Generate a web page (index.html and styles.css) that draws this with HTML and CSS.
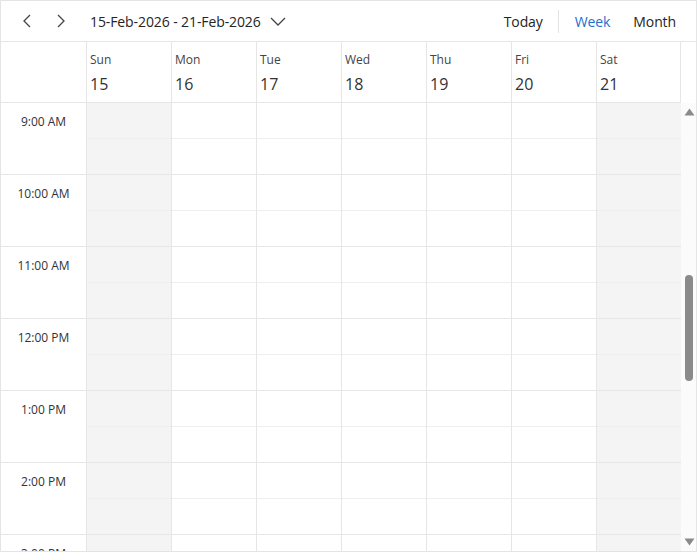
FILE: index.html
```html
<!DOCTYPE html>
<html>
<head>
<meta charset="utf-8">
<link rel="stylesheet" href="styles.css">
</head>
<body>
<div class="frame">
  <div class="toolbar">
    <div class="nav">
      <button class="icon-btn" aria-label="Previous">
        <svg width="10" height="14" viewBox="0 0 10 14"><path d="M8 1 L2 7 L8 13" fill="none" stroke="#444" stroke-width="1.3"/></svg>
      </button>
      <button class="icon-btn" aria-label="Next">
        <svg width="10" height="14" viewBox="0 0 10 14"><path d="M2 1 L8 7 L2 13" fill="none" stroke="#444" stroke-width="1.3"/></svg>
      </button>
      <div class="range">
        <span>15-Feb-2026 - 21-Feb-2026</span>
        <svg class="caret" width="16" height="9" viewBox="0 0 16 9"><path d="M1 1 L8 8 L15 1" fill="none" stroke="#444" stroke-width="1.3"/></svg>
      </div>
    </div>
    <div class="views">
      <span class="view">Today</span>
      <span class="sep"></span>
      <span class="view active">Week</span>
      <span class="view">Month</span>
    </div>
  </div>

  <div class="head">
    <div class="corner"></div>
    <div class="dayhead"><div class="dname">Sun</div><div class="dnum">15</div></div>
    <div class="dayhead"><div class="dname">Mon</div><div class="dnum">16</div></div>
    <div class="dayhead"><div class="dname">Tue</div><div class="dnum">17</div></div>
    <div class="dayhead"><div class="dname">Wed</div><div class="dnum">18</div></div>
    <div class="dayhead"><div class="dname">Thu</div><div class="dnum">19</div></div>
    <div class="dayhead"><div class="dname">Fri</div><div class="dnum">20</div></div>
    <div class="dayhead last"><div class="dname">Sat</div><div class="dnum">21</div></div>
    <div class="head-gap"></div>
  </div>

  <div class="body">
    <div class="grid">
      <div class="times">
        <div class="hour">9:00 AM</div>
        <div class="hour">10:00 AM</div>
        <div class="hour">11:00 AM</div>
        <div class="hour">12:00 PM</div>
        <div class="hour">1:00 PM</div>
        <div class="hour">2:00 PM</div>
        <div class="hour">3:00 PM</div>
      </div>
      <div class="col weekend"></div>
      <div class="col"></div>
      <div class="col"></div>
      <div class="col"></div>
      <div class="col"></div>
      <div class="col"></div>
      <div class="col weekend"></div>
    </div>
    <div class="scrollbar">
      <svg class="arrow" width="11" height="8" viewBox="0 0 11 8"><path d="M0.5 7.5 L5.5 0.5 L10.5 7.5 Z" fill="#8a8a8a"/></svg>
      <div class="thumb"></div>
      <svg class="arrow down" width="11" height="8" viewBox="0 0 11 8"><path d="M0.5 0.5 L5.5 7.5 L10.5 0.5 Z" fill="#8a8a8a"/></svg>
    </div>
  </div>
</div>
</body>
</html>
```

FILE: styles.css
```css
html, body {
  margin: 0;
  padding: 0;
  background: #ffffff;
}

body {
  font-family: "Open Sans", "Noto Sans", "Liberation Sans", sans-serif;
  color: #333333;
}

.frame {
  width: 697px;
  height: 552px;
  box-sizing: border-box;
  border: 1px solid #e4e4e4;
  display: flex;
  flex-direction: column;
  overflow: hidden;
}

/* toolbar */
.toolbar {
  height: 40px;
  flex: 0 0 40px;
  border-bottom: 1px solid #e6e6e6;
  display: flex;
  align-items: center;
  justify-content: space-between;
}

.nav {
  display: flex;
  align-items: center;
}

.icon-btn {
  border: 0;
  background: transparent;
  padding: 0;
  width: 34px;
  height: 32px;
  display: flex;
  align-items: center;
  justify-content: center;
  cursor: pointer;
}

.icon-btn:first-child {
  margin-left: 9px;
}

.range {
  display: flex;
  align-items: center;
  margin-left: 12px;
  font-size: 14px;
  color: #242424;
  letter-spacing: -0.1px;
}

.caret {
  margin-left: 9px;
  margin-top: 1px;
}

.views {
  display: flex;
  align-items: center;
  margin-right: 20px;
  font-size: 14px;
  color: #242424;
}

.view {
  letter-spacing: -0.1px;
}

.view:first-child {
  margin-top: 1px;
}

.sep {
  width: 1px;
  height: 23px;
  background: #e3e3e3;
  margin: 0 16px 0 15px;
}

.view.active {
  color: #1f6fcf;
  margin-right: 23px;
}

/* header */
.head {
  flex: 0 0 61px;
  height: 61px;
  display: grid;
  grid-template-columns: 85px repeat(7, 85px) 15px;
}

.corner,
.dayhead {
  border-bottom: 1px solid #e6e6e6;
  box-sizing: border-box;
}

.dayhead {
  border-left: 1px solid #e6e6e6;
  padding: 10px 0 0 3px;
}

.dayhead.last {
  border-right: 1px solid #e6e6e6;
}

.dname {
  font-size: 12px;
  line-height: 16px;
  color: #444444;
}

.dnum {
  font-size: 16px;
  line-height: 22px;
  margin-top: 5px;
  color: #333333;
}

/* body */
.body {
  flex: 1 1 auto;
  display: flex;
  overflow: hidden;
}

.grid {
  display: grid;
  grid-template-columns: 85px repeat(7, 85px);
  height: 520px;
}

.times {
  display: flex;
  flex-direction: column;
}

.hour {
  flex: 0 0 72px;
  height: 72px;
  box-sizing: border-box;
  border-bottom: 1px solid #e6e6e6;
  text-align: center;
  font-size: 12px;
  line-height: 16px;
  padding-top: 11px;
  color: #333333;
}

.col {
  border-left: 1px solid #e6e6e6;
  background-color: #ffffff;
  background-image: linear-gradient(to bottom,
    transparent 0, transparent 35px,
    #eeeeee 35px, #eeeeee 36px,
    transparent 36px, transparent 71px,
    #e6e6e6 71px, #e6e6e6 72px);
  background-size: 100% 72px;
}

.col.weekend {
  background-color: #f4f4f4;
}

.scrollbar {
  width: 15px;
  flex: 0 0 15px;
  background: #fbfbfb;
  display: flex;
  flex-direction: column;
  align-items: center;
}

.arrow {
  margin-top: 5px;
  margin-left: 1px;
}

.thumb {
  width: 8px;
  height: 106px;
  border-radius: 4px;
  background: #8a8a8a;
  margin-top: 159px;
  margin-left: 1px;
}

.arrow.down {
  margin-top: auto;
  margin-bottom: 5px;
}
```
